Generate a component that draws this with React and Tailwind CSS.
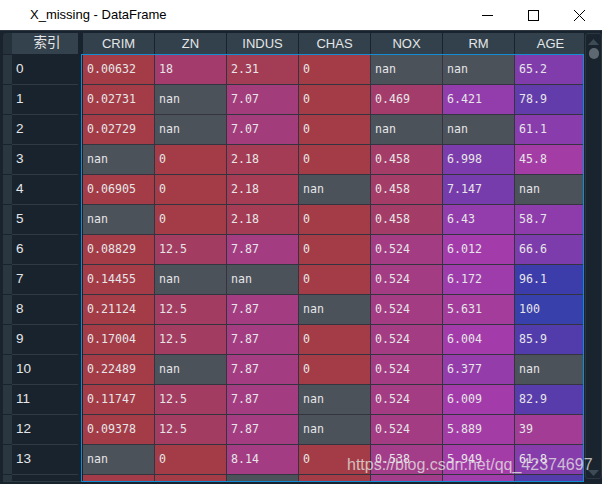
import React from "react";

const COLS = ["CRIM", "ZN", "INDUS", "CHAS", "NOX", "RM", "AGE"];

// min / max of each column, used for the heat-map colouring
const RANGES = [
  [0.00632, 88.9762],
  [0, 100],
  [0.46, 27.74],
  [0, 1],
  [0.385, 0.871],
  [3.561, 8.78],
  [2.9, 100],
];

const ROWS = [
  ["0.00632", "18", "2.31", "0", "nan", "nan", "65.2"],
  ["0.02731", "nan", "7.07", "0", "0.469", "6.421", "78.9"],
  ["0.02729", "nan", "7.07", "0", "nan", "nan", "61.1"],
  ["nan", "0", "2.18", "0", "0.458", "6.998", "45.8"],
  ["0.06905", "0", "2.18", "nan", "0.458", "7.147", "nan"],
  ["nan", "0", "2.18", "0", "0.458", "6.43", "58.7"],
  ["0.08829", "12.5", "7.87", "0", "0.524", "6.012", "66.6"],
  ["0.14455", "nan", "nan", "0", "0.524", "6.172", "96.1"],
  ["0.21124", "12.5", "7.87", "nan", "0.524", "5.631", "100"],
  ["0.17004", "12.5", "7.87", "0", "0.524", "6.004", "85.9"],
  ["0.22489", "nan", "7.87", "0", "0.524", "6.377", "nan"],
  ["0.11747", "12.5", "7.87", "nan", "0.524", "6.009", "82.9"],
  ["0.09378", "12.5", "7.87", "nan", "0.524", "5.889", "39"],
  ["nan", "0", "8.14", "0", "0.538", "5.949", "61.8"],
  ["0.63796", "0", "nan", "0", "0.538", "6.096", "84.5"],
];

const cellColor = (val, col) => {
  if (val === "nan") return "rgb(75,82,89)";
  const v = parseFloat(val);
  const [min, max] = RANGES[col];
  let h = Math.abs(0.66 + (0.33 * (max - v)) / (max - min));
  if (h > 1) h = 1;
  const s = 0.7;
  const hh = h * 6;
  const i = Math.floor(hh) % 6;
  const f = hh - Math.floor(hh);
  const p = 1 - s;
  const q = 1 - s * f;
  const t = 1 - s * (1 - f);
  const [r, g, b] = [
    [1, t, p],
    [q, 1, p],
    [p, 1, t],
    [p, q, 1],
    [t, p, 1],
    [1, p, q],
  ][i];
  const mix = (c, bg) => Math.round(0.6 * c * 255 + 0.4 * bg);
  return `rgb(${mix(r, 25)},${mix(g, 35)},${mix(b, 45)})`;
};

const TitleBar = () => (
  <div className="h-[31px] shrink-0 bg-white flex items-center border-b border-[#2b3640]">
    <span className="pl-[30px] text-[13px] text-black font-['Liberation_Sans',sans-serif]">
      X_missing - DataFrame
    </span>
    <div className="ml-auto flex items-center">
      <div className="w-[46px] h-[30px] flex items-center justify-center">
        <svg width="11" height="11" viewBox="0 0 11 11">
          <path d="M0 5.5h11" stroke="#000" strokeWidth="1" />
        </svg>
      </div>
      <div className="w-[46px] h-[30px] flex items-center justify-center">
        <svg width="11" height="11" viewBox="0 0 11 11">
          <rect x="0.5" y="0.5" width="10" height="10" fill="none" stroke="#000" strokeWidth="1" />
        </svg>
      </div>
      <div className="w-[46px] h-[30px] flex items-center justify-center">
        <svg width="11" height="11" viewBox="0 0 11 11">
          <path d="M0 0L11 11M11 0L0 11" stroke="#000" strokeWidth="1" />
        </svg>
      </div>
    </div>
  </div>
);

const IndexColumn = () => (
  <div className="w-[81px] shrink-0 pl-[3px] flex flex-col">
    <div className="h-[21px] shrink-0 flex rounded-tl-[3px] overflow-hidden">
      <div className="w-[9px] bg-[#25313b]" />
      <div className="w-[66px] bg-[#34424d] flex items-center justify-center pl-[4px] text-[13.5px] text-[#e4e6e8] font-['Liberation_Sans','Noto_Sans_CJK_SC',sans-serif]">
        索引
      </div>
    </div>
    <div className="h-[427px] shrink-0 mt-[1px] overflow-hidden border-b border-[#2e3a44]">
      {ROWS.map((_, i) => (
        <div key={i} className="h-[30px] flex">
          <div className="w-[9px] bg-[#2a3640] border-b border-[#19232d]" />
          <div className="w-[66px] border-b border-[#2e3a44] flex items-center pl-[4px] text-[13.5px] text-[#e4e6e8] font-['Liberation_Sans',sans-serif]">
            {i}
          </div>
        </div>
      ))}
    </div>
  </div>
);

const DataPanel = () => (
  <div className="w-[503px] shrink-0 flex flex-col">
    <div className="h-[21px] shrink-0 flex pl-[2px] overflow-hidden">
      {COLS.map((c) => (
        <div
          key={c}
          className="w-[72px] shrink-0 bg-[#32414b] border-r border-[#19232d] flex items-center justify-center text-[13px] text-[#e4e6e8] font-['Liberation_Sans',sans-serif]"
        >
          {c}
        </div>
      ))}
    </div>
    <div className="h-[428px] shrink-0 border border-[#148cd2] pl-[1px] overflow-hidden">
      {ROWS.map((row, r) => (
        <div key={r} className="flex h-[30px]">
          {row.map((val, c) => (
            <div
              key={c}
              className="w-[72px] shrink-0 border-r border-b border-[#33343f] flex items-center pl-[4px] text-[11.6px] text-[#e6e6e8] font-['DejaVu_Sans_Mono',monospace]"
              style={{ backgroundColor: cellColor(val, c) }}
            >
              {val}
            </div>
          ))}
        </div>
      ))}
    </div>
  </div>
);

const ScrollBar = () => (
  <div className="w-[18px] shrink-0 pl-[1px] h-[446px] flex">
    <div className="flex-1 rounded-[3px] border border-[#2a3742] bg-[#1a242e] flex flex-col items-center pt-[5px] pb-[2px]">
      <svg width="11" height="6" viewBox="0 0 11 6">
        <path d="M0 6L5.5 0L11 6z" fill="#3d4b56" />
      </svg>
      <div className="mt-[3px] w-[10px] h-[11px] rounded-full bg-[#5d6872]" />
      <div className="flex-1" />
      <svg width="11" height="6" viewBox="0 0 11 6">
        <path d="M0 0L5.5 6L11 0z" fill="#3d4b56" />
      </svg>
    </div>
  </div>
);

export default function App() {
  return (
    <div className="relative w-[602px] h-[484px] overflow-hidden bg-[#19232d] flex flex-col">
      <TitleBar />
      <div className="flex flex-1 pt-[2px] overflow-hidden">
        <IndexColumn />
        <DataPanel />
        <ScrollBar />
      </div>
      <div className="absolute left-[347px] top-[453px] text-[16px] text-[rgba(228,228,228,0.78)] font-['Liberation_Sans',sans-serif] whitespace-nowrap">
        https://blog.csdn.net/qq_42374697
      </div>
    </div>
  );
}
